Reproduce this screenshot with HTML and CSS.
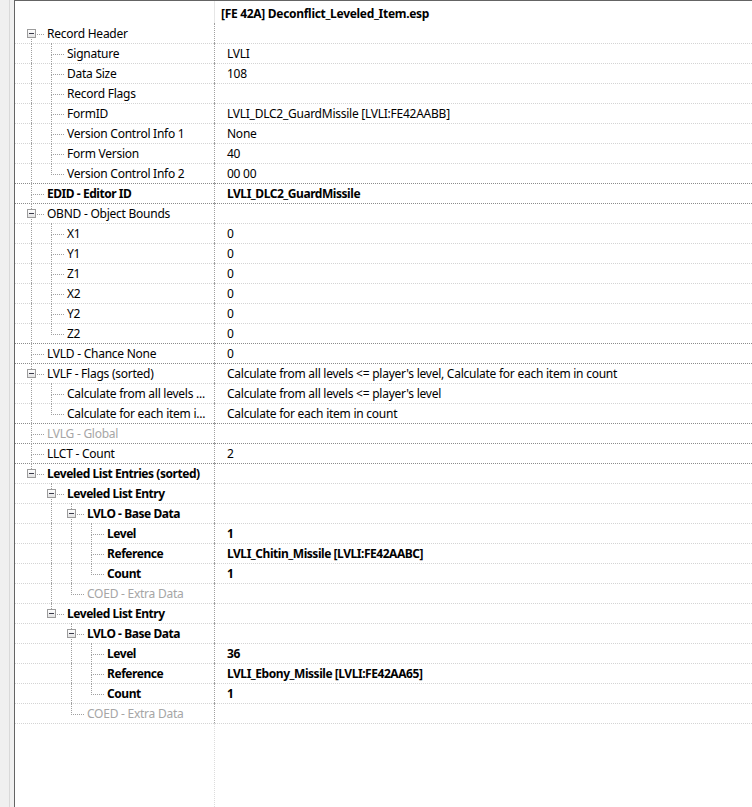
FILE: index.html
```html
<!DOCTYPE html>
<html lang="en">
<head>
    <meta charset="UTF-8">
    <title>Record view</title>
    <link rel="stylesheet" href="styles.css">
</head>
<body>
<div class="frame">
    <div class="gutter"></div>

    <!-- Record tree: name column + value column -->
    <div class="tree">
        <div class="head">
            <div class="name"></div>
            <div class="value">[FE 42A] Deconflict_Leveled_Item.esp</div>
        </div>

        <div class="row root">
            <div class="name"><span class="elbow first"><i class="box"></i></span><span class="label">Record Header</span></div>
            <div class="value"></div>
        </div>
        <div class="row">
            <div class="name"><span class="guide line"></span><span class="elbow"></span><span class="label">Signature</span></div>
            <div class="value">LVLI</div>
        </div>
        <div class="row">
            <div class="name"><span class="guide line"></span><span class="elbow"></span><span class="label">Data Size</span></div>
            <div class="value">108</div>
        </div>
        <div class="row">
            <div class="name"><span class="guide line"></span><span class="elbow"></span><span class="label">Record Flags</span></div>
            <div class="value"></div>
        </div>
        <div class="row">
            <div class="name"><span class="guide line"></span><span class="elbow"></span><span class="label">FormID</span></div>
            <div class="value">LVLI_DLC2_GuardMissile [LVLI:FE42AABB]</div>
        </div>
        <div class="row">
            <div class="name"><span class="guide line"></span><span class="elbow"></span><span class="label">Version Control Info 1</span></div>
            <div class="value">None</div>
        </div>
        <div class="row">
            <div class="name"><span class="guide line"></span><span class="elbow"></span><span class="label">Form Version</span></div>
            <div class="value">40</div>
        </div>
        <div class="row">
            <div class="name"><span class="guide line"></span><span class="elbow last"></span><span class="label">Version Control Info 2</span></div>
            <div class="value">00 00</div>
        </div>

        <div class="row root b">
            <div class="name"><span class="elbow"></span><span class="label">EDID - Editor ID</span></div>
            <div class="value">LVLI_DLC2_GuardMissile</div>
        </div>

        <div class="row root">
            <div class="name"><span class="elbow"><i class="box"></i></span><span class="label">OBND - Object Bounds</span></div>
            <div class="value"></div>
        </div>
        <div class="row">
            <div class="name"><span class="guide line"></span><span class="elbow"></span><span class="label">X1</span></div>
            <div class="value">0</div>
        </div>
        <div class="row">
            <div class="name"><span class="guide line"></span><span class="elbow"></span><span class="label">Y1</span></div>
            <div class="value">0</div>
        </div>
        <div class="row">
            <div class="name"><span class="guide line"></span><span class="elbow"></span><span class="label">Z1</span></div>
            <div class="value">0</div>
        </div>
        <div class="row">
            <div class="name"><span class="guide line"></span><span class="elbow"></span><span class="label">X2</span></div>
            <div class="value">0</div>
        </div>
        <div class="row">
            <div class="name"><span class="guide line"></span><span class="elbow"></span><span class="label">Y2</span></div>
            <div class="value">0</div>
        </div>
        <div class="row">
            <div class="name"><span class="guide line"></span><span class="elbow last"></span><span class="label">Z2</span></div>
            <div class="value">0</div>
        </div>

        <div class="row root">
            <div class="name"><span class="elbow"></span><span class="label">LVLD - Chance None</span></div>
            <div class="value">0</div>
        </div>

        <div class="row root">
            <div class="name"><span class="elbow"><i class="box"></i></span><span class="label">LVLF - Flags (sorted)</span></div>
            <div class="value">Calculate from all levels &lt;= player's level, Calculate for each item in count</div>
        </div>
        <div class="row">
            <div class="name"><span class="guide line"></span><span class="elbow"></span><span class="label">Calculate from all levels ...</span></div>
            <div class="value">Calculate from all levels &lt;= player's level</div>
        </div>
        <div class="row">
            <div class="name"><span class="guide line"></span><span class="elbow last"></span><span class="label">Calculate for each item i...</span></div>
            <div class="value">Calculate for each item in count</div>
        </div>

        <div class="row root dim">
            <div class="name"><span class="elbow"></span><span class="label">LVLG - Global</span></div>
            <div class="value"></div>
        </div>

        <div class="row root">
            <div class="name"><span class="elbow"></span><span class="label">LLCT - Count</span></div>
            <div class="value">2</div>
        </div>

        <!-- entries -->
        <div class="row root b">
            <div class="name"><span class="elbow last"><i class="box"></i></span><span class="label">Leveled List Entries (sorted)</span></div>
            <div class="value"></div>
        </div>
        <div class="row b">
            <div class="name"><span class="guide"></span><span class="elbow"><i class="box"></i></span><span class="label">Leveled List Entry</span></div>
            <div class="value"></div>
        </div>
        <div class="row b">
            <div class="name"><span class="guide"></span><span class="guide line"></span><span class="elbow"><i class="box"></i></span><span class="label">LVLO - Base Data</span></div>
            <div class="value"></div>
        </div>
        <div class="row b">
            <div class="name"><span class="guide"></span><span class="guide line"></span><span class="guide line"></span><span class="elbow"></span><span class="label">Level</span></div>
            <div class="value">1</div>
        </div>
        <div class="row b">
            <div class="name"><span class="guide"></span><span class="guide line"></span><span class="guide line"></span><span class="elbow"></span><span class="label">Reference</span></div>
            <div class="value">LVLI_Chitin_Missile [LVLI:FE42AABC]</div>
        </div>
        <div class="row b">
            <div class="name"><span class="guide"></span><span class="guide line"></span><span class="guide line"></span><span class="elbow last"></span><span class="label">Count</span></div>
            <div class="value">1</div>
        </div>
        <div class="row dim">
            <div class="name"><span class="guide"></span><span class="guide line"></span><span class="elbow last"></span><span class="label">COED - Extra Data</span></div>
            <div class="value"></div>
        </div>

        <div class="row b">
            <div class="name"><span class="guide"></span><span class="elbow last"><i class="box"></i></span><span class="label">Leveled List Entry</span></div>
            <div class="value"></div>
        </div>
        <div class="row b">
            <div class="name"><span class="guide"></span><span class="guide"></span><span class="elbow"><i class="box"></i></span><span class="label">LVLO - Base Data</span></div>
            <div class="value"></div>
        </div>
        <div class="row b">
            <div class="name"><span class="guide"></span><span class="guide"></span><span class="guide line"></span><span class="elbow"></span><span class="label">Level</span></div>
            <div class="value">36</div>
        </div>
        <div class="row b">
            <div class="name"><span class="guide"></span><span class="guide"></span><span class="guide line"></span><span class="elbow"></span><span class="label">Reference</span></div>
            <div class="value">LVLI_Ebony_Missile [LVLI:FE42AA65]</div>
        </div>
        <div class="row b">
            <div class="name"><span class="guide"></span><span class="guide"></span><span class="guide line"></span><span class="elbow last"></span><span class="label">Count</span></div>
            <div class="value">1</div>
        </div>
        <div class="row dim">
            <div class="name"><span class="guide"></span><span class="guide"></span><span class="elbow last"></span><span class="label">COED - Extra Data</span></div>
            <div class="value"></div>
        </div>

        <!-- empty space under the last row -->
        <div class="rest">
            <div class="name"></div>
        </div>
    </div>
</div>
</body>
</html>
```

FILE: styles.css
```css
* {
    box-sizing: border-box;
}

body {
    margin: 0;
    background: #f0f0f0;
    font-family: "Noto Sans", "Open Sans", sans-serif;
    font-size: 12px;
    letter-spacing: -0.25px;
    color: #000;
}

.frame {
    display: flex;
    height: 807px;
}

.gutter {
    width: 10px;
    border-right: 1px solid #d9d9d9;
}

.tree {
    flex: 1;
    margin-left: 4px;
    background: #fff;
    border-left: 1px solid #646464;
    border-top: 1px solid #646464;
    display: flex;
    flex-direction: column;
    overflow: hidden;
}

.head {
    display: flex;
    height: 22px;
    flex: none;
}

.head .name {
    border-right: 1px solid #e6e6e6;
}

.head .value {
    padding-left: 6px;
    padding-top: 3px;
    font-weight: bold;
    letter-spacing: -0.3px;
    line-height: 19px;
}

.name {
    width: 200px;
    flex: none;
    display: flex;
    padding-left: 6px;
    border-right: 1px dotted #a0a0a0;
    white-space: nowrap;
    overflow: hidden;
}

.value {
    padding-left: 12px;
    padding-top: 2px;
    line-height: 18px;
    white-space: nowrap;
}

.row {
    display: flex;
    height: 20px;
    flex: none;
    background: repeating-linear-gradient(to right, #d4d4d4 0 1px, transparent 1px 2px) top left / 100% 1px no-repeat;
}

.row.root {
    background-image: repeating-linear-gradient(to right, #8c8c8c 0 1px, transparent 1px 2px);
}

.tree .row:nth-child(2) {
    background: none;
}

.row.b {
    font-weight: bold;
    letter-spacing: -0.45px;
}

.row.dim {
    color: #a6a6a6;
}

.label {
    padding-left: 3px;
    padding-top: 2px;
    line-height: 18px;
}

/* tree lines */
.guide {
    width: 20px;
    flex: none;
}

.guide.line::before {
    content: "";
    display: block;
    margin-left: 10px;
    height: 20px;
    border-left: 1px dotted #a0a0a0;
}

.elbow {
    position: relative;
    width: 23px;
    flex: none;
}

.elbow::before {
    content: "";
    display: block;
    margin-left: 10px;
    height: 11px;
    border-left: 1px dotted #a0a0a0;
    border-bottom: 1px dotted #a0a0a0;
}

.elbow::after {
    content: "";
    display: block;
    margin-left: 10px;
    height: 9px;
    border-left: 1px dotted #a0a0a0;
}

.elbow.last::after {
    border-left: none;
}

.elbow.first::before {
    border-left: none;
}

/* expander box, drawn over the lines */
.box {
    position: absolute;
    left: 6px;
    top: 6px;
    width: 9px;
    height: 9px;
    border: 1px solid #9c9c9c;
    background: linear-gradient(#fff, #e2e2e2);
}

.box::before {
    content: "";
    position: absolute;
    left: 1px;
    top: 3px;
    width: 5px;
    height: 1px;
    background: #383848;
}

.rest {
    flex: 1;
    display: flex;
    background: repeating-linear-gradient(to right, #d4d4d4 0 1px, transparent 1px 2px) top left / 100% 1px no-repeat;
}

.rest .name {
    border-right: 1px dotted #dcdcdc;
}
```
